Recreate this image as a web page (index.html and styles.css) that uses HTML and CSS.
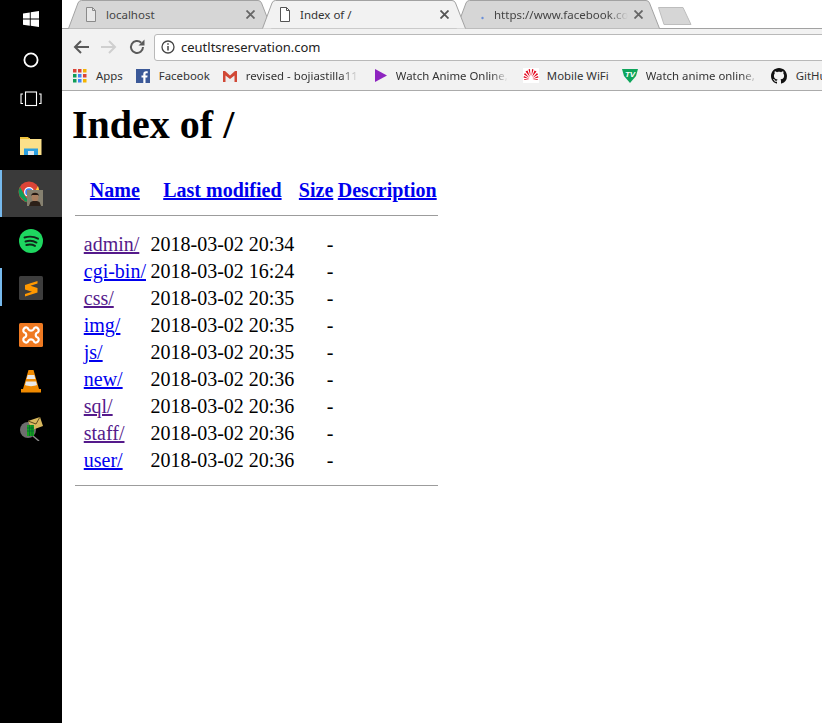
FILE: index.html
```html
<!DOCTYPE html>
<html lang="en">
<head>
  <meta charset="UTF-8">
  <title>Index of /</title>
  <link rel="stylesheet" href="styles.css">
</head>
<body>
  <div class="screen">
    <!-- windows taskbar -->
    <aside class="taskbar">
      <div class="task task-start">
        <svg width="18" height="18" viewBox="0 0 18 18"><path fill="#fff" d="M1 3.4 7.8 2.4V8.6H1ZM8.7 2.3 17 1V8.6H8.7ZM1 9.5H7.8V15.7L1 14.7ZM8.7 9.5H17V17L8.7 15.8Z"/></svg>
      </div>
      <div class="task task-search">
        <svg width="18" height="18" viewBox="0 0 18 18"><circle cx="9" cy="9" r="6.6" fill="none" stroke="#fff" stroke-width="1.8"/></svg>
      </div>
      <div class="task task-view">
        <svg width="22" height="16" viewBox="0 0 22 16" fill="none" stroke="#fff" stroke-width="1.1"><rect x="5.5" y="1" width="11" height="13.5"/><path d="M3 3H1V12.5H3M19 3H21V12.5H19"/></svg>
      </div>
      <div class="task task-files">
        <svg width="22" height="20" viewBox="0 0 22 20"><path fill="#f0c33c" d="M0 1H8L9 2H10V4H0Z"/><path fill="#fbe08a" d="M0 3H21.500V19H0Z"/><path fill="#2b9fe0" d="M4 12.500H18V19H14V15H8V19H4Z"/><path fill="#dfe7ee" d="M8 15H14V19H8Z"/></svg>
      </div>
      <div class="task task-active">
        <svg width="26" height="26" viewBox="0 0 26 26"><circle cx="11" cy="11" r="10.500" fill="#db4437"/><path fill="#0f9d58" d="M2 6 7 15 12 21.500 7 20.500 1.500 15 .6 10Z"/><path fill="#ffcd40" d="M20 5 21.500 11 19 17 14 21.500 11 21.500 15 14Z"/><circle cx="11" cy="11" r="5" fill="#fff"/><circle cx="11" cy="11" r="3.800" fill="#4285f4"/><rect x="9" y="9" width="16" height="16" fill="#85806f"/><ellipse cx="17" cy="16" rx="3.500" ry="4.500" fill="#a97f60"/><path fill="#231813" d="M13 15C13 10.500 21 10.500 21 15L20 14H14Z"/><path fill="#2c2018" d="M11 25 12.500 21 15 20H19L21.500 21 23 25Z"/></svg>
      </div>
      <div class="task">
        <svg width="24" height="24" viewBox="0 0 24 24"><circle cx="12" cy="12" r="12" fill="#1ed760"/><path d="M5.500 8.500C10 7.200 15 7.500 19 9.700M6.500 12.500C10 11.500 14.500 11.800 17.500 13.600M7.300 16C10.500 15.200 13.500 15.500 16 16.900" fill="none" stroke="#10261a" stroke-width="1.900" stroke-linecap="round"/></svg>
      </div>
      <div class="task task-open">
        <svg width="24" height="24" viewBox="0 0 24 24"><rect width="24" height="24" rx="1.500" fill="#3d3d3d"/><path fill="#ff9800" d="M18.500 5 6 9V13.500L13 15.800 6 18V20.500L18.500 16.500V12L11.500 9.800 18.500 7.500Z"/></svg>
      </div>
      <div class="task">
        <svg width="24" height="24" viewBox="0 0 24 24"><rect width="24" height="24" rx="1.500" fill="#ef7a22"/><path fill="none" stroke="#fff" stroke-width="2.200" stroke-linejoin="round" d="M5 5.500C7 3.500 9 4.500 9.500 6.500C10.500 8 13.500 8 14.500 6.500C15 4.500 17 3.500 19 5.500C20.500 7.500 19.500 9.500 17.500 10C16.500 11 16.500 13 17.500 14C19.500 14.500 20.500 16.500 19 18.500C17 20.500 15 19.500 14.500 17.500C13.500 16 10.500 16 9.500 17.500C9 19.500 7 20.500 5 18.500C3.500 16.500 4.500 14.500 6.500 14C7.500 13 7.500 11 6.500 10C4.500 9.500 3.500 7.500 5 5.500Z"/></svg>
      </div>
      <div class="task">
        <svg width="20" height="23" viewBox="0 0 20 23"><path fill="#f08a00" d="M7.500 0H12.500L18 19H20V22.500H0V19H2Z"/><path fill="#e8e8e8" d="M6.700 5H13.300L14.400 9H5.600ZM5 11.500H15L16 15C13 16.500 7 16.500 4 15Z"/></svg>
      </div>
      <div class="task">
        <svg width="24" height="24" viewBox="0 0 24 24"><circle cx="9" cy="13" r="8" fill="#6e6e6e"/><path d="M14 19 20 24" stroke="#8a8a8a" stroke-width="1.500"/><path fill="#d8b85e" d="M9 4 21 0 24 9 13 13Z"/><path fill="none" stroke="#5c4a1e" d="M9 4 17 7 21 0"/><rect x="8" y="8" width="7" height="11" fill="#16a01e"/><path stroke="#063" stroke-width=".8" d="M8 11H15M8 14H15M10.500 8V19M13 8V19"/></svg>
      </div>
    </aside>

    <div class="browser">
      <!-- chrome tabs -->
      <div class="tabstrip">
        <div class="tab">
          <svg class="tab-bg" width="204" height="29" viewBox="0 0 204 29"><path fill="#d6d6d6" stroke="#a2a2a2" d="M.5 28.500 10 3Q11 .5 13.500 .5H190Q192.500 .5 193.500 3L203.500 28.500"/></svg>
          <svg class="page-icon" width="12" height="15" viewBox="0 0 12 15"><path fill="#e8e8e8" stroke="#8a8a8a" d="M1.500 .5H7.500L10.500 3.500V14.500H1.500Z"/><path fill="none" stroke="#8a8a8a" d="M7.500 .5V3.500H10.500"/></svg>
          <span class="tab-title">localhost</span>
          <svg class="tab-close" width="9" height="9" viewBox="0 0 9 9"><path stroke="#666" stroke-width="1.800" d="M.5 .5 8.500 8.500M8.500 .5 .5 8.500"/></svg>
        </div>
        <div class="tab tab-current">
          <svg class="tab-bg" width="204" height="29" viewBox="0 0 204 29"><path fill="#f2f2f2" stroke="#a2a2a2" d="M.5 28.500 10 3Q11 .5 13.500 .5H190Q192.500 .5 193.500 3L203.500 28.500"/></svg>
          <svg class="page-icon" width="12" height="15" viewBox="0 0 12 15"><path fill="#fff" stroke="#555" d="M1.500 .5H7.500L10.500 3.500V14.500H1.500Z"/><path fill="none" stroke="#555" d="M7.500 .5V3.500H10.500"/></svg>
          <span class="tab-title">Index of /</span>
          <svg class="tab-close" width="9" height="9" viewBox="0 0 9 9"><path stroke="#555" stroke-width="1.800" d="M.5 .5 8.500 8.500M8.500 .5 .5 8.500"/></svg>
        </div>
        <div class="tab tab-last">
          <svg class="tab-bg" width="204" height="29" viewBox="0 0 204 29"><path fill="#d6d6d6" stroke="#a2a2a2" d="M.5 28.500 10 3Q11 .5 13.500 .5H190Q192.500 .5 193.500 3L203.500 28.500"/></svg>
          <svg class="page-icon" width="12" height="15" viewBox="0 0 12 15"><circle cx="9.500" cy="11" r="1.200" fill="#6a8fd8"/></svg>
          <span class="tab-title tab-fade">https://www.facebook.com</span>
          <svg class="tab-close" width="9" height="9" viewBox="0 0 9 9"><path stroke="#666" stroke-width="1.800" d="M.5 .5 8.500 8.500M8.500 .5 .5 8.500"/></svg>
        </div>
        <svg class="newtab" width="35" height="18" viewBox="0 0 35 18"><path fill="#d6d6d6" stroke="#bdbdbd" d="M1.500 .5H26L34 17.500H7Z"/></svg>
      </div>

      <div class="toolbar">
        <svg width="16" height="14" viewBox="0 0 16 14"><path fill="none" stroke="#5a5a5a" stroke-width="2" d="M16 7H2M8 1 2 7 8 13"/></svg>
        <svg width="16" height="14" viewBox="0 0 16 14"><path fill="none" stroke="#cfcfcf" stroke-width="2" d="M0 7H14M8 1 14 7 8 13"/></svg>
        <svg width="16" height="16" viewBox="0 0 16 16"><path fill="none" stroke="#5a5a5a" stroke-width="2" d="M14 8A6 6 0 1 1 12.200 3.700"/><path fill="#5a5a5a" d="M15.500 .5V6.500H9.500Z"/></svg>
        <div class="omnibox">
          <svg width="14" height="14" viewBox="0 0 14 14"><circle cx="7" cy="7" r="6" fill="none" stroke="#444" stroke-width="1.300"/><path stroke="#444" stroke-width="1.500" d="M7 6V10.500M7 3.300V4.800"/></svg>
          <span class="url">ceutltsreservation.com</span>
        </div>
      </div>

      <div class="bookmarks">
        <div class="mark">
          <svg width="14" height="14" viewBox="0 0 14 14"><path fill="#db4437" d="M0 0H3.500V3.500H0Z"/><path fill="#db4437" d="M5 0H8.500V3.500H5Z"/><path fill="#f4b400" d="M10 0H13.500V3.500H10Z"/><path fill="#0f9d58" d="M0 5H3.500V8.500H0Z"/><path fill="#4285f4" d="M5 5H8.500V8.500H5Z"/><path fill="#db4437" d="M10 5H13.500V8.500H10Z"/><path fill="#0f9d58" d="M0 10H3.500V13.500H0Z"/><path fill="#4285f4" d="M5 10H8.500V13.500H5Z"/><path fill="#f4b400" d="M10 10H13.500V13.500H10Z"/></svg>
          <span class="mark-text">Apps</span>
        </div>
        <div class="mark">
          <svg width="14" height="14" viewBox="0 0 14 14"><rect width="14" height="14" fill="#3b5998"/><path fill="#fff" d="M9.500 14V8.600H11.300L11.600 6.500H9.500V5.200C9.500 4.600 9.700 4.200 10.500 4.200H11.700V2.300C11.400 2.300 10.800 2.200 10 2.200 8.400 2.200 7.300 3.200 7.300 5V6.500H5.500V8.600H7.300V14Z"/></svg>
          <span class="mark-text">Facebook</span>
        </div>
        <div class="mark">
          <svg width="14" height="14" viewBox="0 0 14 14"><path fill="#eeeeee" d="M1 2H13V13H1Z"/><path fill="#d14836" d="M0 2H2L7 6.500 12 2H14V13H11.500V6.500L7 10 2.500 6.500V13H0Z"/></svg>
          <span class="mark-text mark-fade">revised - bojiastilla11</span>
        </div>
        <div class="mark mark-play">
          <svg width="12" height="13" viewBox="0 0 12 13"><path fill="#8e24c0" d="M0 0 12 6.500 0 13Z"/></svg>
          <span class="mark-text mark-fade">Watch Anime Online,</span>
        </div>
        <div class="mark mark-wide mark-tight">
          <svg width="16" height="15" viewBox="0 0 16 15"><rect width="16" height="15" fill="#fff"/><g fill="#e3051b"><path d="M7.500 8 5.500 1.500 7 1Z"/><path d="M8.500 8 10.500 1.500 9 1Z"/><path d="M7 9 2.500 3.500 4.500 2.500Z"/><path d="M9 9 13.500 3.500 11.500 2.500Z"/><path d="M6.500 10 1 6.500 2 5Z"/><path d="M9.500 10 15 6.500 14 5Z"/><path d="M6.500 11 .5 9.500 1 8Z"/><path d="M9.500 11 15.500 9.500 15 8Z"/><path d="M6.500 12H1.500L1 11Z"/><path d="M9.500 12H14.500L15 11Z"/></g></svg>
          <span class="mark-text">Mobile WiFi</span>
        </div>
        <div class="mark mark-tight">
          <svg width="16" height="15" viewBox="0 0 16 15"><path fill="#0ea55b" d="M0 1H16L14 8 8 15 2 8Z"/><text x="8" y="8.500" class="tv-text">TV</text></svg>
          <span class="mark-text mark-fade">Watch anime online, E</span>
        </div>
        <div class="mark">
          <svg width="16" height="16" viewBox="0 0 16 16"><path fill="#111" d="M8 0C3.580 0 0 3.580 0 8c0 3.540 2.290 6.530 5.470 7.590.4.070.55-.17.55-.38 0-.19-.01-.82-.01-1.490-2.010.37-2.530-.49-2.690-.94-.09-.23-.48-.94-.82-1.130-.28-.15-.68-.52-.01-.53.63-.01 1.080.58 1.230.82.72 1.210 1.870.87 2.330.66.07-.52.28-.87.51-1.070-1.780-.2-3.640-.89-3.640-3.950 0-.87.31-1.590.82-2.150-.08-.2-.36-1.020.08-2.120 0 0 .67-.21 2.200.82.64-.18 1.320-.27 2-.27.68 0 1.360.09 2 .27 1.530-1.040 2.200-.82 2.200-.82.44 1.100.16 1.920.08 2.120.51.56.82 1.270.82 2.150 0 3.070-1.870 3.750-3.650 3.950.29.25.54.73.54 1.480 0 1.070-.01 1.930-.01 2.200 0 .21.15.46.55.38A8.013 8.013 0 0016 8c0-4.420-3.580-8-8-8z"/></svg>
          <span class="mark-text">GitHub</span>
        </div>
      </div>

      <!-- apache directory listing -->
      <main class="page">
        <h1>Index of /</h1>
        <table>
          <tr class="head">
            <th class="ico"></th>
            <th><a href="#">Name</a></th>
            <th><a href="#">Last modified</a></th>
            <th><a href="#">Size</a></th>
            <th><a href="#">Description</a></th>
          </tr>
          <tr><th colspan="5" class="rule"><hr></th></tr>
          <tr><td></td><td><a class="seen" href="#">admin/</a></td><td>2018-03-02 20:34</td><td class="size">-</td><td></td></tr>
          <tr><td></td><td><a href="#">cgi-bin/</a></td><td>2018-03-02 16:24</td><td class="size">-</td><td></td></tr>
          <tr><td></td><td><a class="seen" href="#">css/</a></td><td>2018-03-02 20:35</td><td class="size">-</td><td></td></tr>
          <tr><td></td><td><a href="#">img/</a></td><td>2018-03-02 20:35</td><td class="size">-</td><td></td></tr>
          <tr><td></td><td><a href="#">js/</a></td><td>2018-03-02 20:35</td><td class="size">-</td><td></td></tr>
          <tr><td></td><td><a href="#">new/</a></td><td>2018-03-02 20:36</td><td class="size">-</td><td></td></tr>
          <tr><td></td><td><a class="seen" href="#">sql/</a></td><td>2018-03-02 20:36</td><td class="size">-</td><td></td></tr>
          <tr><td></td><td><a class="seen" href="#">staff/</a></td><td>2018-03-02 20:36</td><td class="size">-</td><td></td></tr>
          <tr><td></td><td><a href="#">user/</a></td><td>2018-03-02 20:36</td><td class="size">-</td><td></td></tr>
          <tr><th colspan="5" class="rule"><hr></th></tr>
        </table>
      </main>
    </div>
  </div>
</body>
</html>
```

FILE: styles.css
```css
body {
  margin: 0;
  background-color: #fff;
  overflow: hidden;
}

.screen {
  display: flex;
  height: 723px;
  width: 822px;
  overflow: hidden;
}

/* Taskbar */
.taskbar {
  flex: 0 0 62px;
  background-color: #000;
}
.task {
  height: 47px;
  display: flex;
  align-items: center;
  justify-content: center;
  box-sizing: border-box;
}
.task-start { height: 38px; }
.task-search { height: 44px; }
.task-view { height: 34px; }
.task-files { height: 54px; padding-top: 6px; }
.task-active {
  background-color: #3a3a3a;
  border-left: 2px solid #76b9ed;
  padding-right: 2px;
}
.task-open { position: relative; }
.task-open::before {
  content: "";
  position: absolute;
  left: 0;
  top: 4px;
  width: 2px;
  height: 38px;
  background-color: #76b9ed;
}

/* Browser chrome */
.browser {
  flex: 1;
  min-width: 0;
  font-family: "Noto Sans", sans-serif;
}
.tabstrip {
  height: 28px;
  display: flex;
  padding-left: 6px;
  position: relative;
  z-index: 1;
}
.tab {
  flex: 0 0 204px;
  min-width: 0;
  height: 28px;
  margin-right: -10px;
  box-sizing: border-box;
  padding: 0 17px;
  display: flex;
  align-items: center;
  position: relative;
  font-size: 11.5px;
  color: #444;
}
.tab-current { z-index: 2; color: #333; }
.tab-bg {
  position: absolute;
  left: 0;
  top: 0;
}
.page-icon, .tab-title, .tab-close { position: relative; }
.page-icon { margin-right: 9px; flex: none; }
.tab-title {
  flex: 1;
  min-width: 0;
  white-space: nowrap;
  overflow: hidden;
}
.tab-fade {
  -webkit-mask-image: linear-gradient(to right, #000 85%, transparent);
  mask-image: linear-gradient(to right, #000 85%, transparent);
}
.tab-close { flex: none; margin-left: 6px; }
.tab-last { z-index: 1; margin-right: 0; }
.tab:first-child { z-index: 1; }
.newtab { margin: 7px 0 0 -3px; }

.toolbar {
  height: 28px;
  padding: 4px 0 0 11px;
  border-top: 1px solid #a2a2a2;
  background-color: #f2f2f2;
  display: flex;
  align-items: center;
  gap: 12px;
  font-size: 13px;
}
.omnibox {
  flex: 1;
  height: 25px;
  margin-left: -3px;
  margin-right: -6px;
  padding-left: 6px;
  background-color: #fff;
  border: 1px solid #b9b9b9;
  border-radius: 3px;
  display: flex;
  align-items: center;
  gap: 6px;
}
.url { color: #222; }

.bookmarks {
  height: 30px;
  background-color: #f2f2f2;
  border-bottom: 1px solid #ababab;
  box-sizing: border-box;
  display: flex;
  align-items: center;
  padding-left: 11px;
  gap: 13px;
  font-size: 11.4px;
  color: #333;
  white-space: nowrap;
}
.mark {
  display: flex;
  align-items: center;
  gap: 9px;
  flex: none;
}
.mark-play { margin-left: 4px; }
.mark-wide { margin-left: 2px; }
.mark-tight { gap: 8px; }
.mark-fade {
  width: 112px;
  overflow: hidden;
  -webkit-mask-image: linear-gradient(to right, #000 85%, transparent);
  mask-image: linear-gradient(to right, #000 85%, transparent);
}
.tv-text {
  font-family: "Liberation Sans", sans-serif;
  font-size: 8px;
  font-weight: bold;
  font-style: italic;
  fill: #fff;
  text-anchor: middle;
}

/* Directory listing */
.page {
  padding: 0 10px;
  font-family: "Liberation Serif", serif;
  font-size: 20px;
  color: #000;
}
h1 {
  font-size: 40px;
  margin: 10px 0 28px;
}
table {
  border-collapse: separate;
  border-spacing: 2.5px 2px;
  margin-left: 1px;
}
th, td {
  padding: 1px 1.25px;
}
.ico { width: 3px; }
.size { text-align: right; }
.rule { padding: 0; }
hr {
  height: 1px;
  margin: 10px 0 14px;
  border: none;
  background-color: #9c9c9c;
}
a { color: #0000ee; }
a.seen { color: #551a8b; }
```
